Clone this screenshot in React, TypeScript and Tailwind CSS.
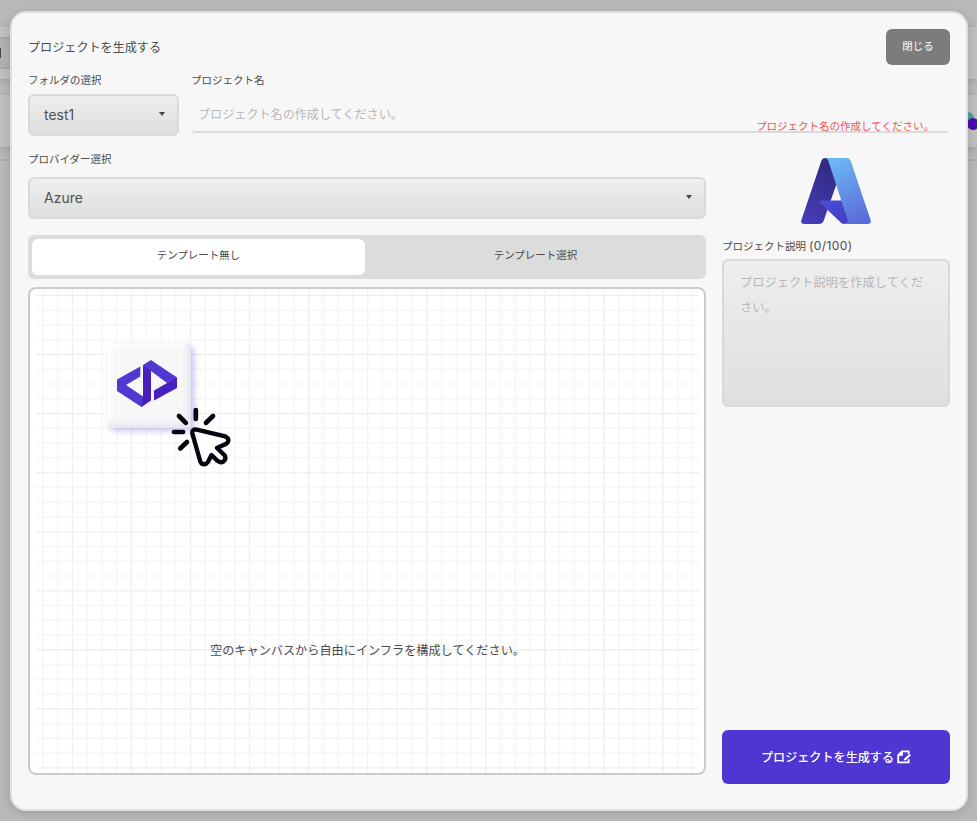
import React from "react";

const JP = "font-['Inter','Noto_Sans_CJK_JP',sans-serif]";

const MINOR = 14.765;

function GridLines() {
  const vertical = Array.from({ length: 45 }, (_, i) => i - 2);
  const horizontal = Array.from({ length: 33 }, (_, i) => i);
  return (
    <svg className="absolute left-0 top-0" width="674" height="484" aria-hidden="true">
      {vertical.map((i) => {
        const x = 42.4 + i * MINOR;
        const major = i % 4 === 0;
        return x > 6 && x < 669 ? (
          <line key={"v" + i} x1={x} x2={x} y1="0" y2="484" stroke={major ? "#efefef" : "#f6f6f6"} strokeWidth={major ? 1.4 : 1.5} />
        ) : null;
      })}
      {horizontal.map((i) => {
        const y = 6.4 + i * MINOR;
        const major = i % 4 === 0;
        return (
          <line key={"h" + i} x1="6" x2="669" y1={y} y2={y} stroke={major ? "#efefef" : "#f6f6f6"} strokeWidth={major ? 1.4 : 1.5} />
        );
      })}
    </svg>
  );
}

function AzureLogo() {
  return (
    <svg width="70" height="66" viewBox="0 0 70 66">
      <defs>
        <linearGradient id="azl" x1="0.6" y1="0" x2="0.3" y2="1">
          <stop offset="0" stopColor="#322a80" />
          <stop offset="1" stopColor="#463bb8" />
        </linearGradient>
        <linearGradient id="azr" x1="0.3" y1="0" x2="0.7" y2="1">
          <stop offset="0" stopColor="#6cb8f3" />
          <stop offset="1" stopColor="#596bdc" />
        </linearGradient>
        <linearGradient id="azm" x1="0" y1="0" x2="1" y2="1">
          <stop offset="0" stopColor="#4c4bd4" />
          <stop offset="1" stopColor="#4440c4" />
        </linearGradient>
      </defs>
      <path d="M24 0H30L35.5 26L22.5 63.2Q21.4 66 18.5 66H3.2Q-.8 66 .5 61.8L20.4 2.7Q21.3 0 24 0Z" fill="url(#azl)" />
      <path d="M20.2 42.5H43L48 62Q47.5 66 43 66Q41.3 66 40 64.8L19.2 45Q18 42.7 20.2 42.5Z" fill="url(#azm)" />
      <path d="M24 0H46.2Q48.8 0 49.7 2.7L69.5 61.8Q70.8 66 66.5 66H43Q47.8 65 46.5 61.5L27.3 2.7Q26.4 0 24 0Z" fill="url(#azr)" />
    </svg>
  );
}

function CodeLogo() {
  return (
    <svg width="60" height="47" viewBox="0 0 60 47">
      <path d="M0 19.5L23.3 6.5V16.5L9 25L26 36.5V46L24.5 47L0 31Z" fill="#5038d2" />
      <path d="M34 0L60 17.5V18.5L50 23L34 11L27 14L26 5Z" fill="#5038d2" />
      <path d="M26 6L34 10.5V40.5L24.5 47L26 36Z" fill="#4820bd" />
      <path d="M60 17.5V28L37 40.5V30.5L51 22.5Z" fill="#4820bd" />
    </svg>
  );
}

function ClickCursor() {
  return (
    <svg className="absolute left-[141px] top-[118px]" width="61" height="61" viewBox="0 0 61 61" fill="none" stroke="#05050f" strokeWidth="4.7" strokeLinecap="round" strokeLinejoin="round">
      <path d="M24.8 3V12M8 9L14.8 15.8M42 9L35 15.8M3 25H12M16 35L9.2 41.5" />
      <path d="M21.4 26.7Q20.6 21.8 25.7 22.6L54.3 29.4Q59.5 32.2 55.8 36.4L46 41L53.8 48.5Q55.5 52.5 52 54.8Q49.5 56 46.5 53.8L40.5 48L37 55Q34.2 58.6 30.6 56.5Q29.5 55.5 29 53.5Z" fill="white" strokeWidth="4.4" />
    </svg>
  );
}

function DocEditIcon() {
  return (
    <svg width="14" height="14" viewBox="0 0 14 14" fill="none" stroke="white" strokeWidth="1.8">
      <path d="M11.6 4V1.4H5L1.2 5.2V12.4H11.6V9.2" />
      <path d="M1 5.4H5.4V1Z" fill="white" strokeWidth="0.8" />
      <path d="M7.4 10L13.2 4.6" strokeWidth="2.2" />
    </svg>
  );
}

function Caret() {
  return <span className="mb-0.5 mr-[0.5px] h-0 w-0 border-x-[3.5px] border-t-[4px] border-x-transparent border-t-[#444]" />;
}

function Select({ value, className }: { value: string; className: string }) {
  return (
    <div className={"flex h-[42px] items-center justify-between rounded-md border-2 border-[#dadada] bg-gradient-to-b from-[#eeeeee] to-[#dedede] pl-3.5 text-sm text-[#505050] " + className}>
      <span>{value}</span>
      <Caret />
    </div>
  );
}

function Backdrop() {
  return (
    <div className="h-full pt-[27px]" aria-hidden="true">
      <div className="flex h-[52px] items-center bg-[#bfbfbf] shadow-[0_2px_8px_rgba(0,0,0,0.15)]">
        <div className="flex h-8 w-24 items-center border-y-2 border-[#a6a6a6] bg-[#b0b0b0]">
          <span className="h-2.5 w-px bg-[#444]" />
        </div>
      </div>
      <div className="mt-4 h-[52px] bg-[#bfbfbf] shadow-[0_2px_8px_rgba(0,0,0,0.15)]" />
      <div className="mt-3 h-0.5 bg-[#a9a9a9]" />
      <span className="absolute left-[962px] top-[112px] h-3 w-3 rounded-full bg-[#4c9f9f]" />
      <span className="absolute left-[967px] top-[118px] h-3 w-3 rounded-full bg-[#470cae]" />
    </div>
  );
}

export default function App() {
  return (
    <div className={"relative h-[821px] w-[977px] overflow-hidden bg-[#b8b8b8] text-[#4b4b4b] " + JP}>
      <Backdrop />
      <main className="absolute left-[10px] top-[11px] flex h-[800px] w-[958px] flex-col rounded-2xl border-2 border-[#dfdfdf] bg-[#f7f7f7] px-4 pt-4 shadow-[0_2px_8px_rgba(0,0,0,0.15)]">
        <header className="flex h-9 items-center justify-between">
          <h1 className="pt-0.5 text-[12.1px]">プロジェクトを生成する</h1>
          <button className="h-9 w-16 rounded-md bg-[#7c7c7c] text-[10.5px] text-white">閉じる</button>
        </header>

        <div className="mt-1.5 flex gap-[13px]">
          <div className="w-[151px]">
            <label className="block h-[23px] text-[10.5px] leading-5">フォルダの選択</label>
            <Select value="test1" className="pr-3" />
          </div>
          <div className="relative flex-1">
            <label className="-ml-px block h-[23px] text-[10.5px] leading-5">プロジェクト名</label>
            <div className="mr-px h-[39px] rounded-sm border-b-2 border-[#dadada] pl-1.5 text-[12.1px] leading-[41px] text-[#b7b7b7]">
              プロジェクト名の作成してください。
            </div>
            <span className="absolute right-[16px] top-[48px] whitespace-nowrap text-[10.5px] leading-4 text-[#e95555]">
              プロジェクト名の作成してください。
            </span>
          </div>
        </div>

        <div className="mt-[14px] flex h-[634px] gap-4">
          <section className="flex w-[678px] flex-col">
            <label className="block h-[27px] text-[10.5px] leading-5">プロバイダー選択</label>
            <Select value="Azure" className="pr-3" />
            <div className="mt-4 flex h-11 rounded-md bg-[#dcdcdc] p-1 text-[10.5px]">
              <button className="h-9 w-[333px] rounded-md bg-white pb-0.5">テンプレート無し</button>
              <button className="h-9 flex-1 pb-0.5 pl-1">テンプレート選択</button>
            </div>
            <div className="relative mt-2 h-[488px] rounded-lg border-2 border-[#cbcbcb] bg-white">
              <GridLines />
              <div className="absolute left-[78px] top-[55px] flex h-[84px] w-[83px] items-center justify-center rounded-sm bg-[#f7f7f7] pb-[5px] pr-[5px] shadow-[3px_3px_6px_rgba(80,56,210,0.3),-2px_-2px_5px_white,inset_-4px_-4px_5px_#e3e6ef,inset_3px_3px_6px_white]">
                <CodeLogo />
              </div>
              <ClickCursor />
              <p className="absolute left-[180px] top-[352px] whitespace-nowrap text-[12.17px] leading-5">
                空のキャンバスから自由にインフラを構成してください。
              </p>
            </div>
          </section>

          <aside className="flex w-[228px] flex-col">
            <div className="mt-[8px] flex justify-center">
              <AzureLogo />
            </div>
            <label className="mt-3 h-[23px] text-[10.5px] leading-[21px]">
              プロジェクト説明 <span className="text-[12px] leading-none tracking-[0.035em]">(0/100)</span>
            </label>
            <div className="h-[148px] rounded-md border-2 border-[#dadada] bg-gradient-to-b from-[#eeeeee] to-[#dfdfdf] px-4 pt-[9px] text-[12.25px] leading-[25px] text-[#b7b7b7]">
              プロジェクト説明を作成してください。
            </div>
            <button className="mb-0 mt-auto flex h-[54px] shrink-0 items-center justify-center gap-[3px] rounded-md bg-[#4f36d2] text-[12.1px] font-medium text-white">
              <span className="pt-0.5">プロジェクトを生成する</span>
              <DocEditIcon />
            </button>
          </aside>
        </div>
      </main>
    </div>
  );
}
